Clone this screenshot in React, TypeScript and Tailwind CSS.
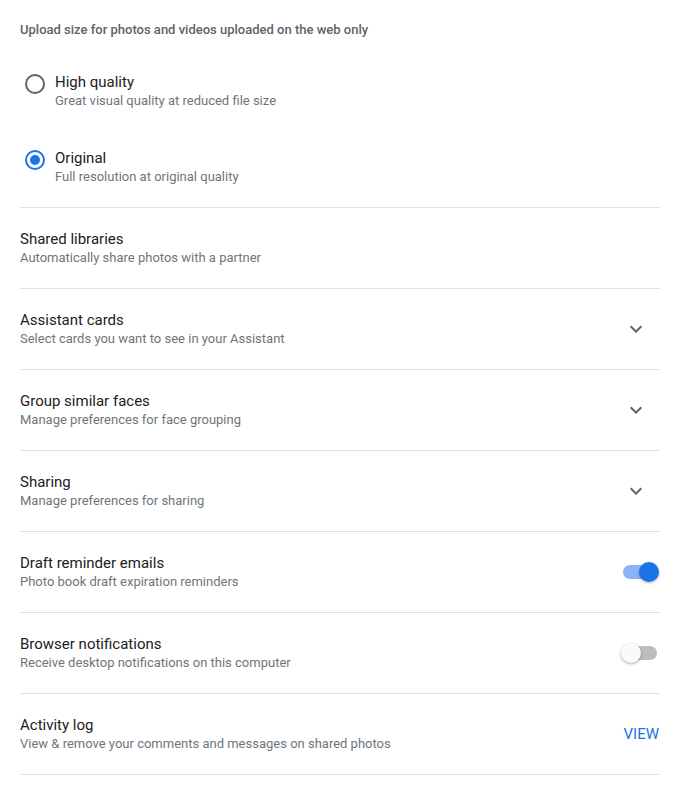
import React from 'react';

type Row = {
    title: string;
    subtitle: string;
    control?: 'chevron' | 'on' | 'off' | 'view';
};

const rows: Row[] = [
    { title: 'Shared libraries', subtitle: 'Automatically share photos with a partner' },
    { title: 'Assistant cards', subtitle: 'Select cards you want to see in your Assistant', control: 'chevron' },
    { title: 'Group similar faces', subtitle: 'Manage preferences for face grouping', control: 'chevron' },
    { title: 'Sharing', subtitle: 'Manage preferences for sharing', control: 'chevron' },
    { title: 'Draft reminder emails', subtitle: 'Photo book draft expiration reminders', control: 'on' },
    { title: 'Browser notifications', subtitle: 'Receive desktop notifications on this computer', control: 'off' },
    { title: 'Activity log', subtitle: 'View & remove your comments and messages on shared photos', control: 'view' },
];

function Chevron() {
    return (
        <svg width="24" height="24" viewBox="0 0 24 24" className="mr-[12px]">
            <path d="M7.41 8.59 12 13.17l4.59-4.58L18 10l-6 6-6-6 1.41-1.41z" fill="#5f6368" />
        </svg>
    );
}

function Toggle({ on }: { on: boolean }) {
    return (
        <div className="relative w-[38px] h-[20px] flex items-center mr-[1px]">
            <div className={`ml-[2px] w-[34px] h-[14px] rounded-full ${on ? 'bg-[#8ab4f8]' : 'bg-[#bdbdbd]'}`} />
            {on ? (
                <div className="absolute right-0 top-0 w-[20px] h-[20px] rounded-full bg-[#1a73e8] shadow-[0_1px_3px_rgba(0,0,0,0.3)]" />
            ) : (
                <div className="absolute left-0 top-0 w-[20px] h-[20px] rounded-full bg-[#fafafa] shadow-[0_1px_3px_rgba(0,0,0,0.35)]" />
            )}
        </div>
    );
}

function Radio({ checked, title, subtitle }: { checked: boolean; title: string; subtitle: string }) {
    return (
        <div className="flex items-start">
            <div className="ml-[5px] mt-[2px] w-[20px] h-[20px] shrink-0 flex items-center justify-center">
                {checked ? (
                    <div className="w-[20px] h-[20px] rounded-full border-2 border-[#1a73e8] flex items-center justify-center">
                        <div className="w-[10px] h-[10px] rounded-full bg-[#1a73e8]" />
                    </div>
                ) : (
                    <div className="w-[20px] h-[20px] rounded-full border-2 border-[#5f6368]" />
                )}
            </div>
            <div className="ml-[10px] flex flex-col">
                <span className="text-[15px] leading-[20px] text-[#212121]">{title}</span>
                <span className="text-[13px] leading-[18px] text-[#70757a]">{subtitle}</span>
            </div>
        </div>
    );
}

export default function App() {
    return (
        <div className="min-h-screen bg-white font-['Roboto',sans-serif]">
            <div className="ml-[20px] w-[640px]">

                <div className="pt-[21px] border-b border-[#e0e0e0] pb-[21px]">
                    <div className="text-[13px] leading-[18px] font-medium text-[#5f6368]">
                        Upload size for photos and videos uploaded on the web only
                    </div>
                    <div className="mt-[33px] flex flex-col gap-[38px]">
                        <Radio checked={false} title="High quality" subtitle="Great visual quality at reduced file size" />
                        <Radio checked title="Original" subtitle="Full resolution at original quality" />
                    </div>
                </div>

                {rows.map((row) => (
                    <div key={row.title} className="h-[81px] flex items-center justify-between border-b border-[#e0e0e0]">
                        <div className="flex flex-col">
                            <span className="text-[15px] leading-[20px] text-[#212121]">{row.title}</span>
                            <span className="text-[13px] leading-[18px] text-[#70757a]">{row.subtitle}</span>
                        </div>
                        {row.control === 'chevron' && <Chevron />}
                        {row.control === 'on' && <Toggle on />}
                        {row.control === 'off' && <Toggle on={false} />}
                        {row.control === 'view' && (
                            <span className="text-[15px] leading-[20px] text-[#1a73e8] mr-[1px]">VIEW</span>
                        )}
                    </div>
                ))}

            </div>
        </div>
    );
}
